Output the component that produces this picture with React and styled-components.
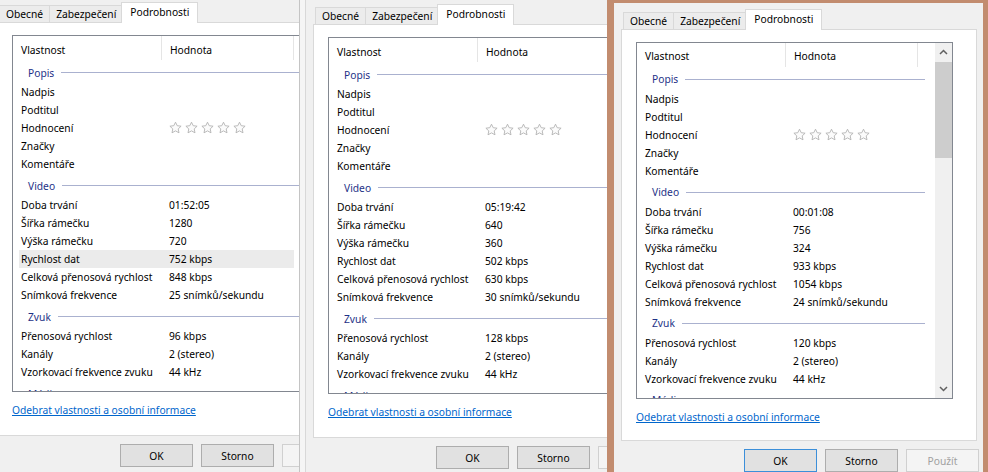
import React from "react";
import styled, { createGlobalStyle } from "styled-components";

const GlobalStyle = createGlobalStyle`
  html, body {
    margin: 0;
    padding: 0;
    background: #f0f0f0;
  }
  body {
    font-family: "Segoe UI", "Noto Sans", sans-serif;
    font-size: 10.25px;
    color: #000;
  }
  * {
    box-sizing: border-box;
  }
`;

const Screen = styled.div`
  display: flex;
  width: 988px;
  height: 472px;
  overflow: hidden;
  background: #f0f0f0;
`;

const Pane = styled.div`
  flex: 0 0 ${(p) => p.$width}px;
  height: 472px;
  overflow: hidden;
  padding-top: ${(p) => p.$top}px;
  display: flex;
  background: #f0f0f0;
`;

// okraj neaktivniho okna mezi prvnim a druhym dialogem
const InactiveEdge = styled.div`
  flex: 0 0 7px;
  height: 472px;
  background: #f5f5f5;
  border-left: 1px solid #c4c4c4;
  border-right: 1px solid #d8d8d8;
`;

const ActiveWindow = styled.div`
  flex: 0 0 381px;
  height: 472px;
  overflow: hidden;
  display: flex;
  background: #f0f0f0;
  border-style: solid;
  border-color: #c28c6f;
  border-width: 3px 5px 0 7px;
  padding-top: 4px;
`;

const Dialog = styled.div`
  flex: 0 0 369px;
  width: 369px;
  margin-left: ${(p) => p.$shift || 0}px;
  display: flex;
  flex-direction: column;
`;

const TabStrip = styled.div`
  height: 22px;
  display: flex;
  align-items: flex-end;
  padding-left: 9px;
`;

const Tab = styled.div`
  position: relative;
  height: ${(p) => (p.$active ? 21 : 18)}px;
  margin: 0 ${(p) => (p.$active ? -2 : 0)}px -1px;
  padding: 0 ${(p) => (p.$active ? 8 : 6)}px;
  display: flex;
  align-items: center;
  padding-bottom: ${(p) => (p.$active ? 2 : 0)}px;
  background: ${(p) => (p.$active ? "#fff" : "#ececec")};
  border: 1px solid #d9d9d9;
  border-bottom: ${(p) => (p.$active ? "none" : "1px solid #d9d9d9")};
  border-left: ${(p) => (p.$joined ? "none" : "1px solid #d9d9d9")};
  z-index: ${(p) => (p.$active ? 2 : 1)};
  white-space: nowrap;
`;

const TabFrame = styled.div`
  height: 414px;
  margin: 0 6px 0 7px;
  border: 1px solid #d9d9d9;
  background: #fff;
  padding: 12px 0 0 14px;
`;

const ListBox = styled.div`
  width: 317px;
  height: 357px;
  border: 1px solid #828790;
  background: #fff;
  display: flex;
  overflow: hidden;
`;

const ListContent = styled.div`
  flex: 1;
  overflow: hidden;
`;

const Header = styled.div`
  height: 24px;
  display: flex;
`;

const HeaderCell = styled.div`
  flex: 0 0 ${(p) => p.$width}px;
  display: flex;
  align-items: center;
  padding: 3px 0 0 8px;
  border-right: ${(p) => (p.$last ? "none" : "1px solid #e5e5e5")};
`;

const GroupRow = styled.div`
  height: 23px;
  display: flex;
  align-items: center;
  padding: 2px 10px 0 15px;
  color: #1e3287;

  &::after {
    content: "";
    flex: 1;
    height: 1px;
    margin-left: 7px;
    background: #aab1cf;
  }
`;

const ItemRow = styled.div`
  height: 18px;
  width: 275px;
  margin-left: 6px;
  padding-left: 2px;
  display: flex;
  align-items: center;
  background: ${(p) => (p.$hover ? "#ebebeb" : "transparent")};
`;

const Name = styled.div`
  flex: 0 0 148px;
  white-space: nowrap;
`;

const Value = styled.div`
  flex: 1;
  white-space: nowrap;
  display: flex;
  align-items: center;
`;

const Scrollbar = styled.div`
  flex: 0 0 17px;
  display: flex;
  flex-direction: column;
  background: #f0f0f0;
`;

const ScrollArrow = styled.div`
  height: 18px;
  display: flex;
  align-items: center;
  justify-content: center;
  margin-top: ${(p) => (p.$down ? "auto" : "0")};
`;

const Thumb = styled.div`
  height: 96px;
  margin-top: 1px;
  background: #cdcdcd;
`;

const LinkRow = styled.div`
  margin-top: 11px;
`;

const Link = styled.a`
  color: #0066cc;
  text-decoration: underline;
  cursor: pointer;
`;

const ButtonRow = styled.div`
  display: flex;
  justify-content: flex-end;
  gap: 8px;
  padding: 8px 4px 0 0;
`;

const Button = styled.div`
  width: 73px;
  height: 23px;
  display: flex;
  align-items: center;
  justify-content: center;
  background: ${(p) => (p.$disabled ? "#f4f4f4" : "#e1e1e1")};
  color: ${(p) => (p.$disabled ? "#a0a0a0" : "#000")};
  border: 1px solid
    ${(p) => (p.$focused ? "#3c8fd9" : p.$disabled ? "#d0d0d0" : "#adadad")};
`;

const STAR =
  "M6.5 0.7 L8.2 4.2 L12.1 4.7 L9.2 7.4 L10 11.3 L6.5 9.4 L3 11.3 L3.8 7.4 L0.9 4.7 L4.8 4.2 Z";

function Stars() {
  return (
    <svg width="82" height="14" viewBox="0 0 82 14">
      {[0, 1, 2, 3, 4].map((i) => (
        <path
          key={i}
          d={STAR}
          transform={`translate(${i * 16} 0.5)`}
          fill="#fbfbfb"
          stroke="#b3b3b3"
          strokeWidth="0.9"
          strokeLinejoin="round"
        />
      ))}
    </svg>
  );
}

function Chevron({ down }) {
  return (
    <svg width="9" height="6" viewBox="0 0 9 6">
      <path
        d={down ? "M1 1 L4.5 4.5 L8 1" : "M1 5 L4.5 1.5 L8 5"}
        fill="none"
        stroke="#606060"
        strokeWidth="1.5"
      />
    </svg>
  );
}

function PropertyDialog({ info, shift, hoverRow, focused }) {
  const groups = [
    {
      title: "Popis",
      rows: [
        ["Nadpis", ""],
        ["Podtitul", ""],
        ["Hodnocení", <Stars />],
        ["Značky", ""],
        ["Komentáře", ""],
      ],
    },
    {
      title: "Video",
      rows: [
        ["Doba trvání", info.duration],
        ["Šířka rámečku", info.width],
        ["Výška rámečku", info.height],
        ["Rychlost dat", info.dataRate],
        ["Celková přenosová rychlost", info.totalRate],
        ["Snímková frekvence", info.fps],
      ],
    },
    {
      title: "Zvuk",
      rows: [
        ["Přenosová rychlost", info.audioRate],
        ["Kanály", "2 (stereo)"],
        ["Vzorkovací frekvence zvuku", "44 kHz"],
      ],
    },
    { title: "Média", rows: [] },
  ];

  return (
    <Dialog $shift={shift}>
      <TabStrip>
        <Tab>Obecné</Tab>
        <Tab $joined>Zabezpečení</Tab>
        <Tab $active>Podrobnosti</Tab>
      </TabStrip>
      <TabFrame>
        <ListBox>
          <ListContent>
            <Header>
              <HeaderCell $width={149}>Vlastnost</HeaderCell>
              <HeaderCell $width={132}>Hodnota</HeaderCell>
              <HeaderCell $width={17} $last />
            </Header>
            {groups.map((g) => (
              <React.Fragment key={g.title}>
                <GroupRow>{g.title}</GroupRow>
                {g.rows.map(([name, value]) => (
                  <ItemRow key={name} $hover={name === hoverRow}>
                    <Name>{name}</Name>
                    <Value>{value}</Value>
                  </ItemRow>
                ))}
              </React.Fragment>
            ))}
          </ListContent>
          <Scrollbar>
            <ScrollArrow>
              <Chevron />
            </ScrollArrow>
            <Thumb />
            <ScrollArrow $down>
              <Chevron down />
            </ScrollArrow>
          </Scrollbar>
        </ListBox>
        <LinkRow>
          <Link>Odebrat vlastnosti a osobní informace</Link>
        </LinkRow>
      </TabFrame>
      <ButtonRow>
        <Button $focused={focused}>OK</Button>
        <Button>Storno</Button>
        <Button $disabled>Použít</Button>
      </ButtonRow>
    </Dialog>
  );
}

const videos = [
  {
    duration: "01:52:05",
    width: "1280",
    height: "720",
    dataRate: "752 kbps",
    totalRate: "848 kbps",
    fps: "25 snímků/sekundu",
    audioRate: "96 kbps",
  },
  {
    duration: "05:19:42",
    width: "640",
    height: "360",
    dataRate: "502 kbps",
    totalRate: "630 kbps",
    fps: "30 snímků/sekundu",
    audioRate: "128 kbps",
  },
  {
    duration: "00:01:08",
    width: "756",
    height: "324",
    dataRate: "933 kbps",
    totalRate: "1054 kbps",
    fps: "24 snímků/sekundu",
    audioRate: "120 kbps",
  },
];

export default function App() {
  return (
    <>
      <GlobalStyle />
      <Screen>
        <Pane $width={299} $top={0}>
          <PropertyDialog info={videos[0]} shift={-10} hoverRow="Rychlost dat" />
        </Pane>
        <InactiveEdge />
        <Pane $width={301} $top={2}>
          <PropertyDialog info={videos[1]} />
        </Pane>
        <ActiveWindow>
          <PropertyDialog info={videos[2]} focused />
        </ActiveWindow>
      </Screen>
    </>
  );
}
